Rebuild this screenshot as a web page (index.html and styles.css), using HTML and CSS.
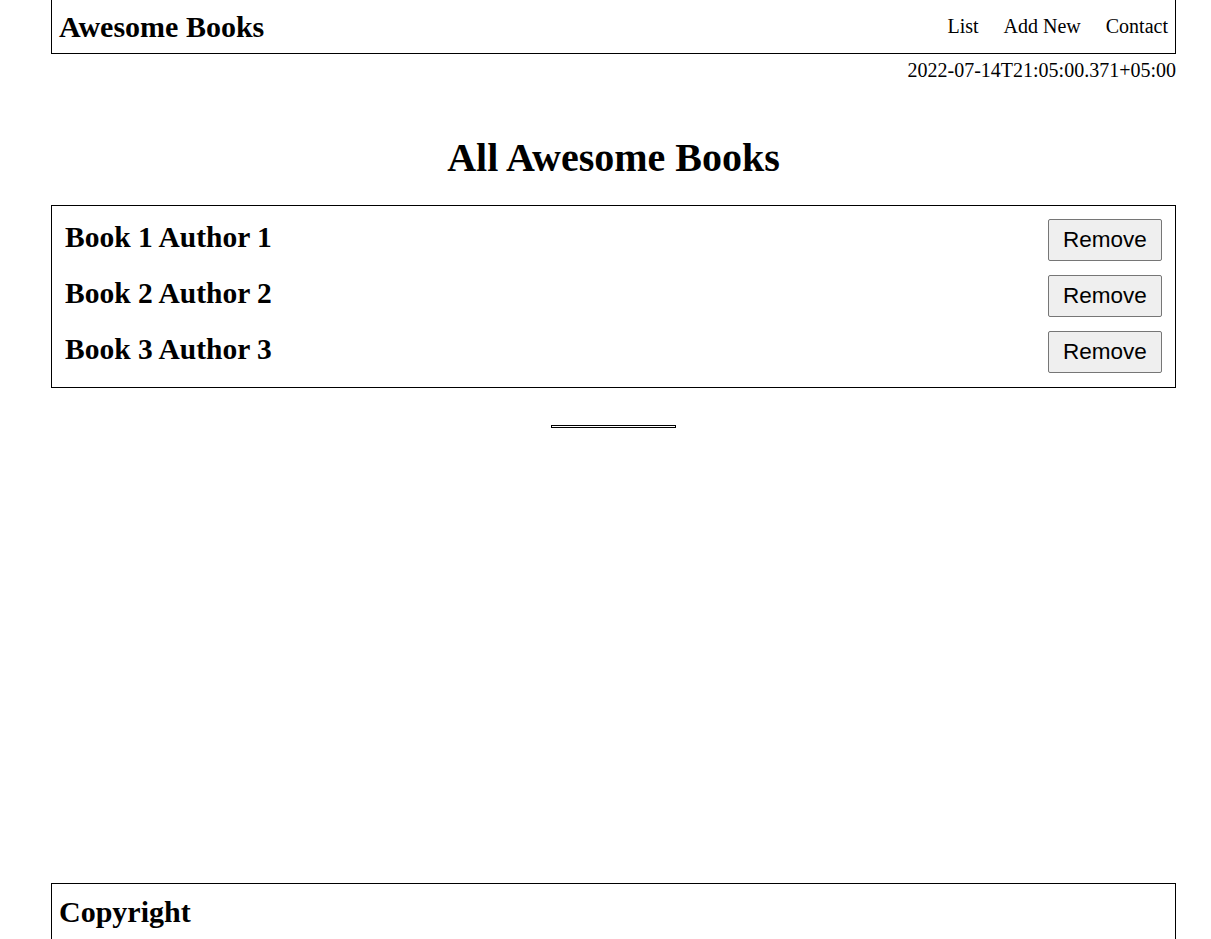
FILE: index.html
```html
<!DOCTYPE html>
<html>
<head>
<meta charset="utf-8">
<link rel="stylesheet" href="styles.css">
<title>Awesome Books</title>
</head>
<body>
<div class="page">
  <header class="topbar">
    <h2 class="brand">Awesome Books</h2>
    <nav class="nav">
      <a class="nav-link">List</a>
      <a class="nav-link">Add New</a>
      <a class="nav-link">Contact</a>
    </nav>
  </header>
  <p class="date">2022-07-14T21:05:00.371+05:00</p>
  <main class="main">
    <h1 class="title">All Awesome Books</h1>
    <ul class="books">
      <li class="book"><h2 class="book-name">Book 1 Author 1</h2><button class="remove">Remove</button></li>
      <li class="book"><h2 class="book-name">Book 2 Author 2</h2><button class="remove">Remove</button></li>
      <li class="book"><h2 class="book-name">Book 3 Author 3</h2><button class="remove">Remove</button></li>
    </ul>
    <hr class="divider">
  </main>
  <footer class="footer">
    <h2 class="brand">Copyright</h2>
  </footer>
</div>
</body>
</html>
```
FILE: styles.css
```css
html, body {
  margin: 0;
  padding: 0;
  background: #fff;
  font-family: "Liberation Serif", "Times New Roman", serif;
  font-size: 20px;
  color: #000;
}
body { overflow: hidden; }
.page {
  margin: 0 35px 0 51px;
  height: 939px;
  display: flex;
  flex-direction: column;
}
.topbar {
  display: flex;
  justify-content: space-between;
  align-items: center;
  border: 1px solid #000;
  border-top: none;
  height: 54px;
  box-sizing: border-box;
  padding: 0 7px;
}
.brand {
  margin: 0;
  font-size: 30px;
  font-weight: bold;
}
.nav {
  display: flex;
  gap: 25px;
}
.nav-link {
  font-size: 20px;
  color: #000;
  text-decoration: none;
}
.date {
  margin: 5px 0 0;
  text-align: right;
  font-size: 20px;
}
.main {
  flex: 1;
}
.title {
  text-align: center;
  font-size: 40px;
  margin: 52px 0 24px;
}
.books {
  list-style: none;
  margin: 0;
  border: 1px solid #000;
  padding: 13px 13px 14px 13px;
  display: flex;
  flex-direction: column;
  gap: 14px;
}
.book {
  display: flex;
  justify-content: space-between;
  align-items: flex-start;
}
.book-name {
  margin: 0;
  font-size: 29.5px;
  line-height: 34px;
  padding-top: 1px;
}
.remove {
  font-family: "Liberation Sans", Arial, sans-serif;
  font-size: 22.5px;
  padding: 6px 10px;
  height: 42px;
  width: 114px;
  background: #efefef;
  border: 1px solid #767676;
  border-radius: 2px;
  color: #000;
}
.divider {
  width: 123px;
  margin: 37px auto 0;
  border: 1px solid #000;
  height: 1px;
  padding: 0;
}
.footer {
  border: 1px solid #000;
  border-bottom: none;
  height: 56px;
  box-sizing: border-box;
  padding: 11px 7px 0;
}
```
